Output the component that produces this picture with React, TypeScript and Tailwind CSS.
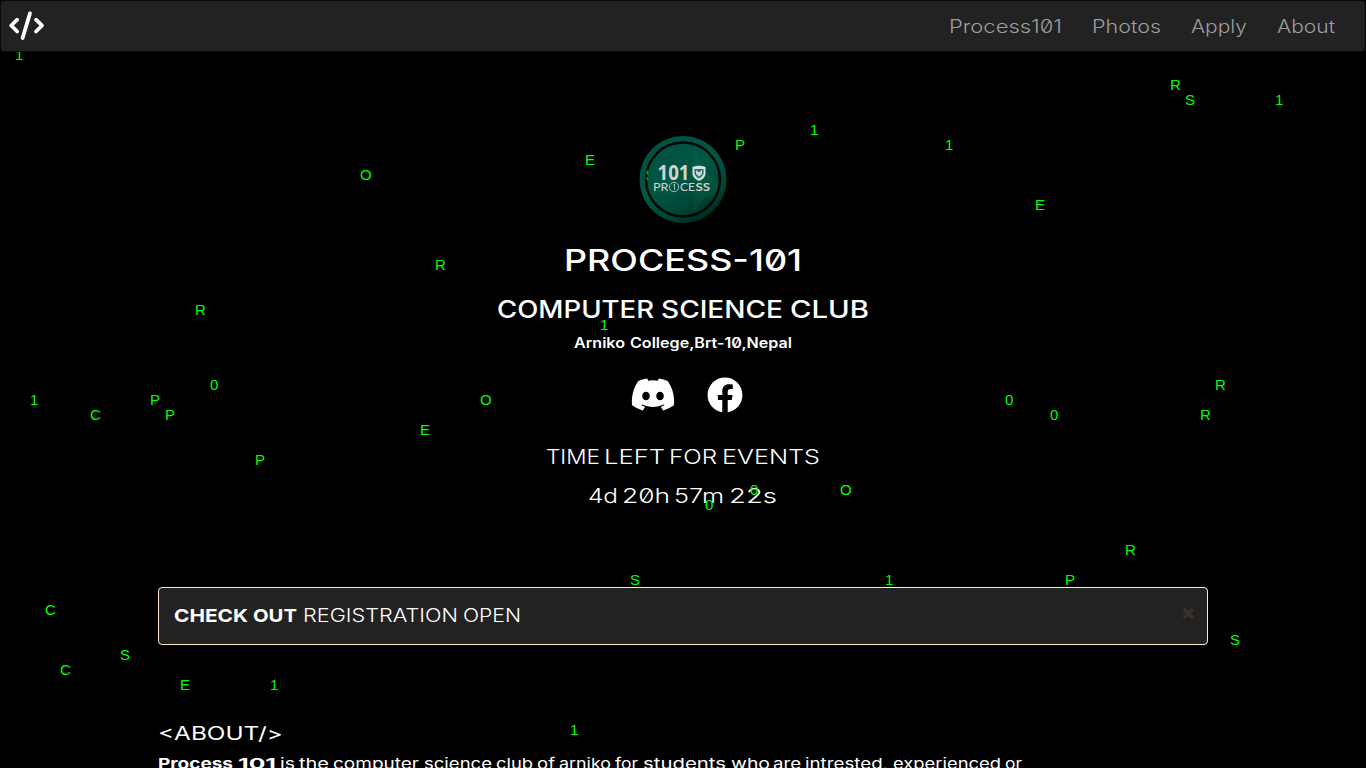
import React, { useLayoutEffect, useRef, useState } from "react";
import { FaFacebook } from "react-icons/fa";
import { FaDiscord } from "react-icons/fa6";

type Word = [text: string, width: number, gap?: number];

/* Sets a word to an exact width by stretching its letters sideways. */
function Wide({ text, width, gap = 0 }: { text: string; width: number; gap?: number }) {
  const ref = useRef<HTMLSpanElement>(null);
  const [scale, setScale] = useState(1);
  useLayoutEffect(() => {
    if (ref.current) setScale(width / parseFloat(getComputedStyle(ref.current).width));
  }, [width, text]);
  return (
    <span className="inline-block shrink-0 whitespace-nowrap" style={{ width, marginLeft: gap }}>
      <span ref={ref} className="inline-block origin-left" style={{ transform: `scaleX(${scale})` }}>
        {text}
      </span>
    </span>
  );
}

function Line({ words, className }: { words: Word[]; className: string }) {
  return (
    <div className={`flex ${className}`}>
      {words.map(([text, width, gap], i) => (
        <Wide key={i} text={text} width={width} gap={gap} />
      ))}
    </div>
  );
}

const drops: [string, number, number][] = [
  ["1", 15, 60], ["R", 1170, 90], ["S", 1185, 105], ["1", 1275, 105], ["1", 810, 135],
  ["P", 735, 150], ["1", 945, 150], ["E", 585, 165], ["O", 360, 180],
  ["E", 1035, 210], ["R", 435, 270], ["R", 195, 315], ["1", 600, 330], ["0", 210, 390],
  ["R", 1215, 390], ["1", 30, 405], ["P", 150, 405], ["O", 480, 405], ["0", 1005, 405],
  ["C", 90, 420], ["P", 165, 420], ["0", 1050, 420], ["R", 1200, 420], ["E", 420, 435],
  ["P", 255, 465], ["0", 750, 495], ["O", 840, 495], ["0", 705, 510], ["R", 1125, 555],
  ["S", 630, 585], ["1", 885, 585], ["P", 1065, 585], ["C", 45, 615], ["S", 1230, 645],
  ["S", 120, 660], ["C", 60, 675], ["E", 180, 690], ["1", 270, 690], ["1", 570, 735],
];

function Rain() {
  return (
    <div className="pointer-events-none absolute inset-0 font-['Liberation_Sans',sans-serif] text-[15px] leading-[15px] text-[#00ff00]">
      {drops.map(([c, x, y], i) => (
        <span key={i} className="absolute" style={{ left: x, top: y - 13 }}>{c}</span>
      ))}
    </div>
  );
}

function Brand() {
  return (
    <svg viewBox="0 0 38 30" className="h-[30px] w-[38px]" fill="none" stroke="#fff" strokeWidth="3.8" strokeLinecap="round" strokeLinejoin="round">
      <path d="M9.2 8.7 L3.2 14.5 L9.2 20.5" />
      <path d="M22 2.4 L14.6 27" />
      <path d="M28 8.7 L34 14.5 L28 20.5" />
    </svg>
  );
}

function Badge() {
  return (
    <svg viewBox="0 0 88 88" className="relative h-[88px] w-[88px] [font-feature-settings:normal]">
      <defs>
        <linearGradient id="felt" x1="0.15" y1="0" x2="0.7" y2="1">
          <stop offset="0" stopColor="#02503f" />
          <stop offset="0.5" stopColor="#015744" />
          <stop offset="0.78" stopColor="#014635" />
          <stop offset="1" stopColor="#00291e" />
        </linearGradient>
        <clipPath id="edge"><rect x="0" y="30" width="9.5" height="20" /></clipPath>
      </defs>
      <circle cx="44" cy="43.5" r="43.5" fill="url(#felt)" />
      <path d="M56 7 Q60 38 82 47 L80 60 Q66 54 52 80 Q60 55 52 40Z" fill="#17735f" opacity="0.2" />
      <circle cx="44" cy="43.5" r="37" fill="none" stroke="#010504" strokeWidth="2.4" />
      <text x="6" y="44" fill="#00b51c" fontFamily="Liberation Sans, sans-serif" fontSize="15" clipPath="url(#edge)">S</text>
      <text x="18.5" y="44" fill="#d2d4d1" fontFamily="Open Sans, sans-serif" fontWeight="700" fontSize="21" textLength="32" lengthAdjust="spacingAndGlyphs">101</text>
      <path d="M53.5 31 Q60 28.5 66.5 31 V38 Q66 42.5 60 45 Q54 42.5 53.5 38Z" fill="#d3e0dc" />
      <path d="M55.5 33 H64.5 V38 Q63 41 60 42.5 Q57 41 55.5 38Z" fill="#28705f" />
      <path d="M57 34.5 h1.7 v1.5 h2.6 v-1.5 h1.7 v3.5 l-3 2.5 -3 -2.5Z" fill="#c3dad3" />
      <path d="M52.5 42 Q57 43 60 46 Q63 43 67.5 42 L66 46 H54Z" fill="#075e1f" />
      <g fill="#d2d4d1" fontFamily="Lato, sans-serif" fontSize="11">
        <text x="14" y="55" textLength="15.5" lengthAdjust="spacingAndGlyphs">PR</text>
        <text x="41" y="55" textLength="15" lengthAdjust="spacingAndGlyphs">CE</text>
        <text x="56.5" y="55" fontWeight="700" textLength="14.5" lengthAdjust="spacingAndGlyphs">SS</text>
      </g>
      <circle cx="35" cy="51" r="4.7" fill="none" stroke="#d2d4d1" strokeWidth="0.8" />
      <path d="M34.2 49.2 L35.5 48.2 V54" fill="none" stroke="#d2d4d1" strokeWidth="0.8" />
    </svg>
  );
}

export default function App() {
  return (
    <div className="relative flex h-[768px] w-[1366px] flex-col overflow-hidden bg-black font-['Inter',sans-serif] text-white">
      <nav className="relative z-10 flex h-[52px] shrink-0 items-center justify-between rounded-[4px] border border-[#080808] bg-[#222222] pl-[7px] pr-[30px]">
        <Brand />
        <div className="flex gap-[30px] pt-[2px] text-[18px] font-light leading-[50px] text-[#9d9d9d] [font-feature-settings:'zero']">
          <Wide text="Process101" width={113} />
          <Wide text="Photos" width={69} />
          <Wide text="Apply" width={56} />
          <Wide text="About" width={58} />
        </div>
      </nav>

      <header className="flex flex-col items-center pt-[84px] [font-feature-settings:'zero']">
        <Badge />
        <Line className="mt-[16px] text-[30px] font-medium leading-[40px]" words={[["PROCESS-101", 238]]} />
        <Line className="mt-[15px] text-[24px] font-medium leading-[30px]" words={[["COMPUTER", 157], ["SCIENCE", 122, 7], ["CLUB", 79, 7]]} />
        <Line className="mt-[8px] text-[14px] font-semibold leading-[20px]" words={[["Arniko", 51], ["College,Brt-10,Nepal", 162, 5]]} />
        <div className="mt-[23px] flex h-[37px] items-center gap-[31px] pl-[6px]">
          <FaDiscord className="h-[37px] w-[46px]" />
          <FaFacebook className="h-[36px] w-[36px]" />
        </div>
        <Line className="mt-[31px] text-[20px] font-light leading-[26px]" words={[["TIME", 54], ["LEFT", 61, 4], ["FOR", 48, 4], ["EVENTS", 98, 5]]} />
        <Line className="mt-[13px] pr-[2px] text-[20px] font-light leading-[26px]" words={[["4d", 30], ["20h", 48, 4], ["57m", 50, 4], ["22s", 48, 5]]} />
      </header>

      <main className="mx-[158px] mt-[78px]">
        <div className="flex h-[58px] items-start justify-between rounded-[4px] border border-[#faebcc] bg-[#222222] pl-[15px] pr-[12px]">
          <div className="flex text-[18px] leading-[56px]">
            <Line className="font-bold" words={[["CHECK", 74], ["OUT", 44, 5]]} />
            <Line className="font-light" words={[["REGISTRATION", 155, 6], ["OPEN", 58, 5]]} />
          </div>
          <button className="mt-[14px] text-[20px] font-black leading-[20px] text-[#3b332a]">×</button>
        </div>
        <Line className="mt-[76px] text-[18px] leading-[26px]" words={[["<ABOUT/>", 125]]} />
        <div className="mt-[7px] flex text-[15px] leading-[20px]">
          <Line className="font-bold" words={[["Process", 75], ["101", 38, 5]]} />
          <Line className="" words={[["is", 15, 4], ["the", 30, 4], ["computer", 86, 4], ["science", 68, 5], ["club", 37, 4], ["of", 18, 4], ["arniko", 52, 4], ["for", 23, 4], ["students", 83, 5], ["who", 39, 5], ["are", 28, 3], ["intrested,", 83, 4], ["experienced", 108, 5], ["or", 17, 4]]} />
        </div>
      </main>
      <Rain />
    </div>
  );
}
